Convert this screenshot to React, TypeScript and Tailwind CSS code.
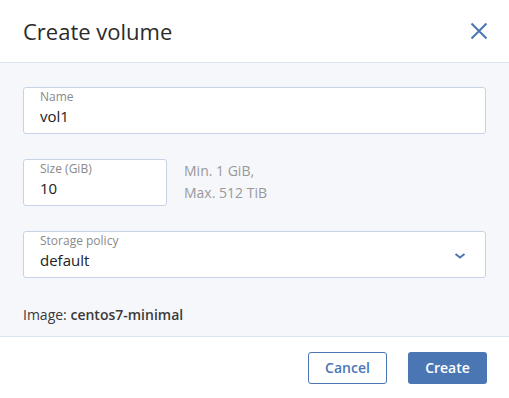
import React from 'react';

const font = { fontFamily: '"Open Sans", "Noto Sans", sans-serif' };

const Field: React.FC<{ label: string; value: string; className?: string; children?: React.ReactNode }> = ({
  label,
  value,
  className,
  children,
}) => (
  <div
    className={`relative h-[47px] rounded-[3px] border border-[#c6d4e8] bg-white pl-[16px] ${className || ''}`}
  >
    <div className="text-[12px] leading-[18px] text-[#8a8a8a]">{label}</div>
    <div className="text-[15px] leading-[20px] text-[#222]">{value}</div>
    {children}
  </div>
);

const App: React.FC = () => {
  return (
    <div className="flex h-[398px] w-[509px] flex-col bg-white" style={font}>
      <div className="flex h-[63px] shrink-0 items-center justify-between border-b border-[#dce4f0] pl-[23px] pr-[21px]">
        <h1 className="text-[22px] leading-[30px] text-[#2b2b2b]">Create volume</h1>
        <svg width="18" height="18" viewBox="0 0 18 18" className="text-[#4a77b4]">
          <path d="M1.5 1.5 L16.5 16.5 M16.5 1.5 L1.5 16.5" stroke="currentColor" strokeWidth="2" fill="none" />
        </svg>
      </div>

      <div className="flex flex-1 flex-col bg-[#f5f7fb] px-[23px] pt-[24px]">
        <Field label="Name" value="vol1" />

        <div className="mt-[25px] flex items-start gap-[17px]">
          <Field label="Size (GiB)" value="10" className="w-[144px]" />
          <div className="pt-[1px] text-[14px] leading-[22px] text-[#999]">
            <div>Min. 1 GiB,</div>
            <div>Max. 512 TiB</div>
          </div>
        </div>

        <Field label="Storage policy" value="default" className="mt-[25px]">
          <svg
            width="12"
            height="8"
            viewBox="0 0 12 8"
            className="absolute right-[19px] top-[20px] text-[#4a77b4]"
          >
            <path d="M1.5 2 L6 5.5 L10.5 2" stroke="currentColor" strokeWidth="2" fill="none" />
          </svg>
        </Field>

        <div className="mt-[27px] text-[14px] leading-[20px] text-[#3a3a3a]">
          Image: <span className="font-semibold">centos7-minimal</span>
        </div>
      </div>

      <div className="flex h-[62px] shrink-0 items-center justify-end gap-[21px] border-t border-[#dce4f0] pr-[22px]">
        <button className="h-[32px] w-[79px] rounded-[3px] border border-[#4a77b4] bg-white text-[14px] font-semibold text-[#4a77b4]">
          Cancel
        </button>
        <button className="h-[32px] w-[79px] rounded-[3px] bg-[#4a77b4] text-[14px] font-semibold text-white">
          Create
        </button>
      </div>
    </div>
  );
};

export default App;
